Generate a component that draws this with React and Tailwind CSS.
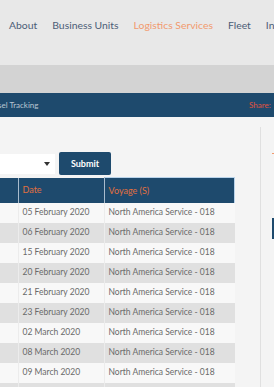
import React from 'react';

const rows = [
  '05 February 2020',
  '06 February 2020',
  '15 February 2020',
  '20 February 2020',
  '21 February 2020',
  '23 February 2020',
  '02 March 2020',
  '08 March 2020',
  '09 March 2020',
  '10 March 2020',
];

function App() {
  return (
    <div className="w-[274px] h-[387px] overflow-hidden bg-[#f4f4f4] font-['Lato','Liberation_Sans',sans-serif]">
      {/* Top nav */}
      <nav className="h-[65px] bg-[#e8e8e8] flex gap-[15px] pl-[9px] pt-[17px] text-[10.4px] leading-[16px] text-[#4c5d77] whitespace-nowrap">
        <span>About</span>
        <span>Business Units</span>
        <span className="text-[#f29a6e]">Logistics Services</span>
        <span>Fleet</span>
        <span>Investors</span>
      </nav>
      <div className="h-[28px] bg-[#d3d3d3]" />

      {/* Breadcrumb bar */}
      <div className="h-[24px] bg-[#1e4a6d] flex items-center justify-between overflow-hidden text-[8px] whitespace-nowrap">
        <span className="text-[#b9c6d3] -ml-[2px]">sel Tracking</span>
        <span className="text-[#e0523f] w-[25px] shrink-0">Share:</span>
      </div>

      <div className="flex">
        <div className="w-[260px] shrink-0 pt-[35px]">
          {/* Search form */}
          <div className="flex items-center gap-[4px] h-[23px]">
            <div className="w-[55px] h-[20px] bg-white flex items-center justify-end pr-[5px]">
              <svg width="6" height="4" viewBox="0 0 6 4">
                <path d="M0 0H6L3 4Z" fill="#333" />
              </svg>
            </div>
            <button className="w-[52px] h-[23px] bg-[#1e4a6d] rounded-[2px] text-white text-[9px] font-bold">
              Submit
            </button>
          </div>

          {/* Results table */}
          <table className="mt-[2px] w-[235px] border-collapse table-fixed whitespace-nowrap">
            <thead>
              <tr className="h-[25px] bg-[#1e4a6d] text-[#e0703f] text-left text-[9px]">
                <th className="w-[18px] border-r border-[#a9bccd] font-normal" />
                <th className="w-[86px] border-r border-[#a9bccd] font-normal pl-[4px]">Date</th>
                <th className="font-normal pl-[4px] border-r border-t border-[#b9d3ea]">Voyage (S)</th>
              </tr>
            </thead>
            <tbody className="text-[#6a6a6a] text-[8.5px]">
              {rows.map((d, i) => (
                <tr key={d} className={`h-[20px] ${i % 2 ? 'bg-[#e0e0e0]' : 'bg-[#f8f8f8]'}`}>
                  <td className="border-r border-[#ececec]" />
                  <td className="border-r border-[#ececec] pl-[4px]">{d}</td>
                  <td className="pl-[4px]">North America Service - 018</td>
                </tr>
              ))}
            </tbody>
          </table>
        </div>

        {/* Side panel */}
        <div className="flex-1 mt-[10px] h-[270px] border-l border-[#e0e0e0] pl-[11px]">
          <div className="mt-[26px] h-[1px] w-[4px] bg-[#f29a6e]" />
          <div className="mt-[64px] h-[21px] w-[4px] bg-[#1e4a6d]" />
        </div>
      </div>
    </div>
  );
}

export default App;
